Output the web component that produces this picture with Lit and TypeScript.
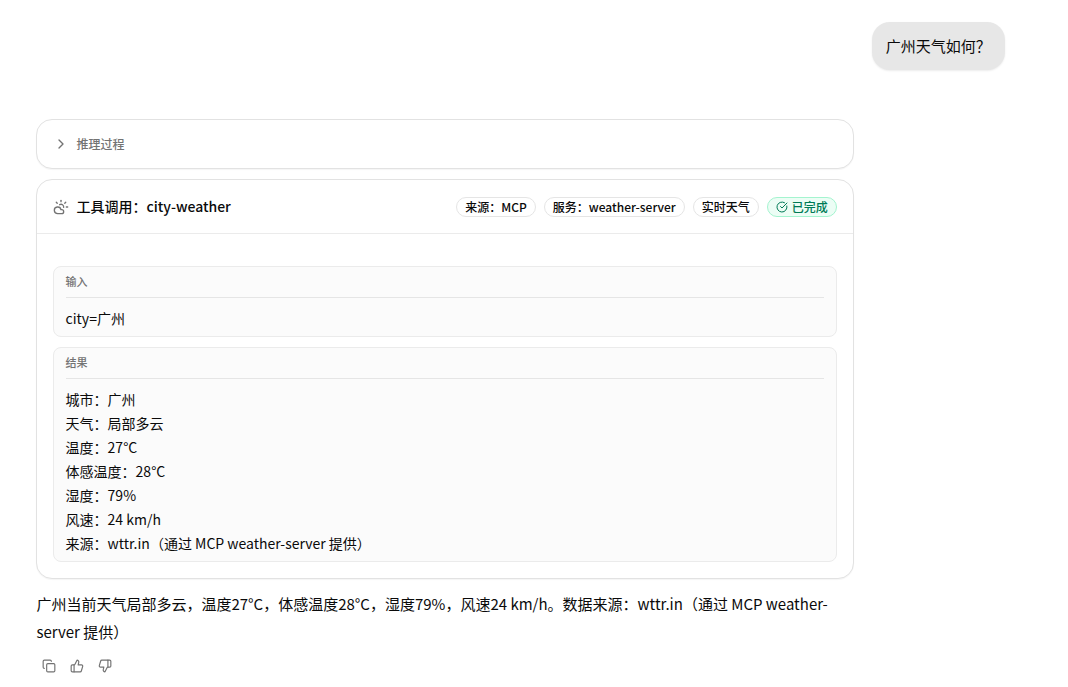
import { LitElement, html, css, svg } from 'lit';
import { customElement } from 'lit/decorators.js';

const icons = {
  chevron: svg`<path d="m9 18 6-6-6-6"/>`,
  weather: svg`<path d="M12 2v2"/><path d="m4.93 4.93 1.41 1.41"/><path d="M20 12h2"/><path d="m19.07 4.93-1.41 1.41"/><path d="M15.947 12.65a4 4 0 0 0-5.925-4.128"/><path d="M13 22H7a5 5 0 1 1 4.9-6H13a3 3 0 0 1 0 6Z"/>`,
  check: svg`<path d="M21.801 10A10 10 0 1 1 17 3.335"/><path d="m9 11 3 3L22 4"/>`,
  copy: svg`<rect width="14" height="14" x="8" y="8" rx="2" ry="2"/><path d="M4 16c-1.1 0-2-.9-2-2V4c0-1.1.9-2 2-2h10c1.1 0 2 .9 2 2"/>`,
  up: svg`<path d="M7 10v12"/><path d="M15 5.88 14 10h5.83a2 2 0 0 1 1.92 2.56l-2.33 8A2 2 0 0 1 17.5 22H4a2 2 0 0 1-2-2v-8a2 2 0 0 1 2-2h2.76a2 2 0 0 0 1.79-1.11L12 2a3.13 3.13 0 0 1 3 3.88Z"/>`,
  down: svg`<path d="M17 14V2"/><path d="M9 18.12 10 14H4.17a2 2 0 0 1-1.92-2.56l2.33-8A2 2 0 0 1 6.5 2H20a2 2 0 0 1 2 2v8a2 2 0 0 1-2 2h-2.76a2 2 0 0 0-1.79 1.11L12 22a3.13 3.13 0 0 1-3-3.88Z"/>`,
};

const icon = (name: keyof typeof icons, size = 14) => html`<svg width=${size} height=${size} viewBox="0 0 24 24"
  fill="none" stroke="currentColor" stroke-width="2" stroke-linecap="round" stroke-linejoin="round">${icons[name]}</svg>`;

@customElement('app-root')
export class AppRoot extends LitElement {
  static styles = css`
    :host {
      display: block;
      box-sizing: border-box;
      height: 687px;
      overflow: hidden;
      padding: 22px 63.3px 0 36.4px;
      background: #fff;
      color: #0a0a0a;
      font-family: 'Noto Sans CJK SC', sans-serif;
      font-size: 15px;
      line-height: 28px;
    }
    * { box-sizing: border-box; }
    svg { display: block; flex: none; }
    .user { display: flex; justify-content: flex-end; }
    .bubble {
      height: 48px;
      padding: 9.5px 14px;
      border-radius: 18px;
      background: #e7e7e7;
      box-shadow: 0 1px 2px rgba(0, 0, 0, 0.08);
    }
    .reply { width: 817.4px; margin-top: 49px; }
    .card {
      border: 1px solid #e2e2e2;
      border-radius: 16px;
      background: #fff;
      box-shadow: 0 1px 1px rgba(0, 0, 0, 0.04);
    }
    .reasoning {
      display: flex;
      align-items: center;
      gap: 8px;
      height: 50px;
      padding-left: 15.2px;
      color: #737373;
      font-size: 12px;
      font-weight: 500;
    }
    .tool { height: 400px; margin-top: 10px; }
    .head {
      display: flex;
      align-items: center;
      height: 54px;
      padding: 0 16px;
      border-bottom: 1px solid #ebebeb;
    }
    .head > svg { color: #737373; }
    .title { margin: -2px 0 0 7.1px; font-size: 14px; font-weight: 500; }
    .badges { display: flex; gap: 8px; margin-left: auto; }
    .badge {
      display: flex;
      align-items: center;
      gap: 4px;
      height: 20px;
      padding: 0 8px;
      border: 1px solid #e5e5e5;
      border-radius: 10px;
      font-size: 12px;
      font-weight: 500;
      line-height: 18px;
      white-space: nowrap;
    }
    .done { color: #007a55; background: #ecfdf5; border-color: #a4f4cf; }
    .body { display: flex; flex-direction: column; gap: 10px; padding: 32px 16px 16px; }
    .panel {
      padding: 0 12px 6px;
      border: 1px solid #ebebeb;
      border-radius: 8px;
      background: #fbfbfb;
    }
    .label {
      height: 31px;
      border-bottom: 1px solid #e5e5e5;
      color: #737373;
      font-size: 11px;
      font-weight: 500;
      line-height: 28px;
      text-indent: -0.8px;
    }
    .lines { padding-top: 8px; font-size: 14px; line-height: 24px; text-indent: -0.8px; }
    .answer { margin: 11px 0 0; }
    .actions { display: flex; gap: 14px; margin: 13px 0 0 5.6px; color: #737373; }
  `;

  private result = [
    '城市:广州', '天气:局部多云', '温度:27°C', '体感温度:28°C',
    '湿度:79%', '风速:24 km/h', '来源:wttr.in(通过 MCP weather-server 提供)',
  ].map((line) => line.replace(':', '\uff1a').replace('(', '\uff08').replace(')', '\uff09'));

  render() {
    return html`
      <div class="user"><div class="bubble">广州天气如何&#xff1f;</div></div>
      <div class="reply">
        <section class="card reasoning">${icon('chevron', 16)}<span>推理过程</span></section>
        <section class="card tool">
          <header class="head">
            ${icon('weather', 16)}
            <span class="title">工具调用&#xff1a;city-weather</span>
            <div class="badges">
              <span class="badge">来源&#xff1a;MCP</span>
              <span class="badge">服务&#xff1a;weather-server</span>
              <span class="badge">实时天气</span>
              <span class="badge done">${icon('check', 12)}已完成</span>
            </div>
          </header>
          <div class="body">
            <div class="panel">
              <div class="label">输入</div>
              <div class="lines">city=广州</div>
            </div>
            <div class="panel">
              <div class="label">结果</div>
              <div class="lines">${this.result.map((line) => html`<div>${line}</div>`)}</div>
            </div>
          </div>
        </section>
        <p class="answer">广州当前天气局部多云&#xff0c;温度27°C&#xff0c;体感温度28°C&#xff0c;湿度79%&#xff0c;风速24 km/h。数据来源&#xff1a;wttr.in&#xff08;通过 MCP weather-server 提供&#xff09;</p>
        <div class="actions">${icon('copy')}${icon('up')}${icon('down')}</div>
      </div>
    `;
  }
}
